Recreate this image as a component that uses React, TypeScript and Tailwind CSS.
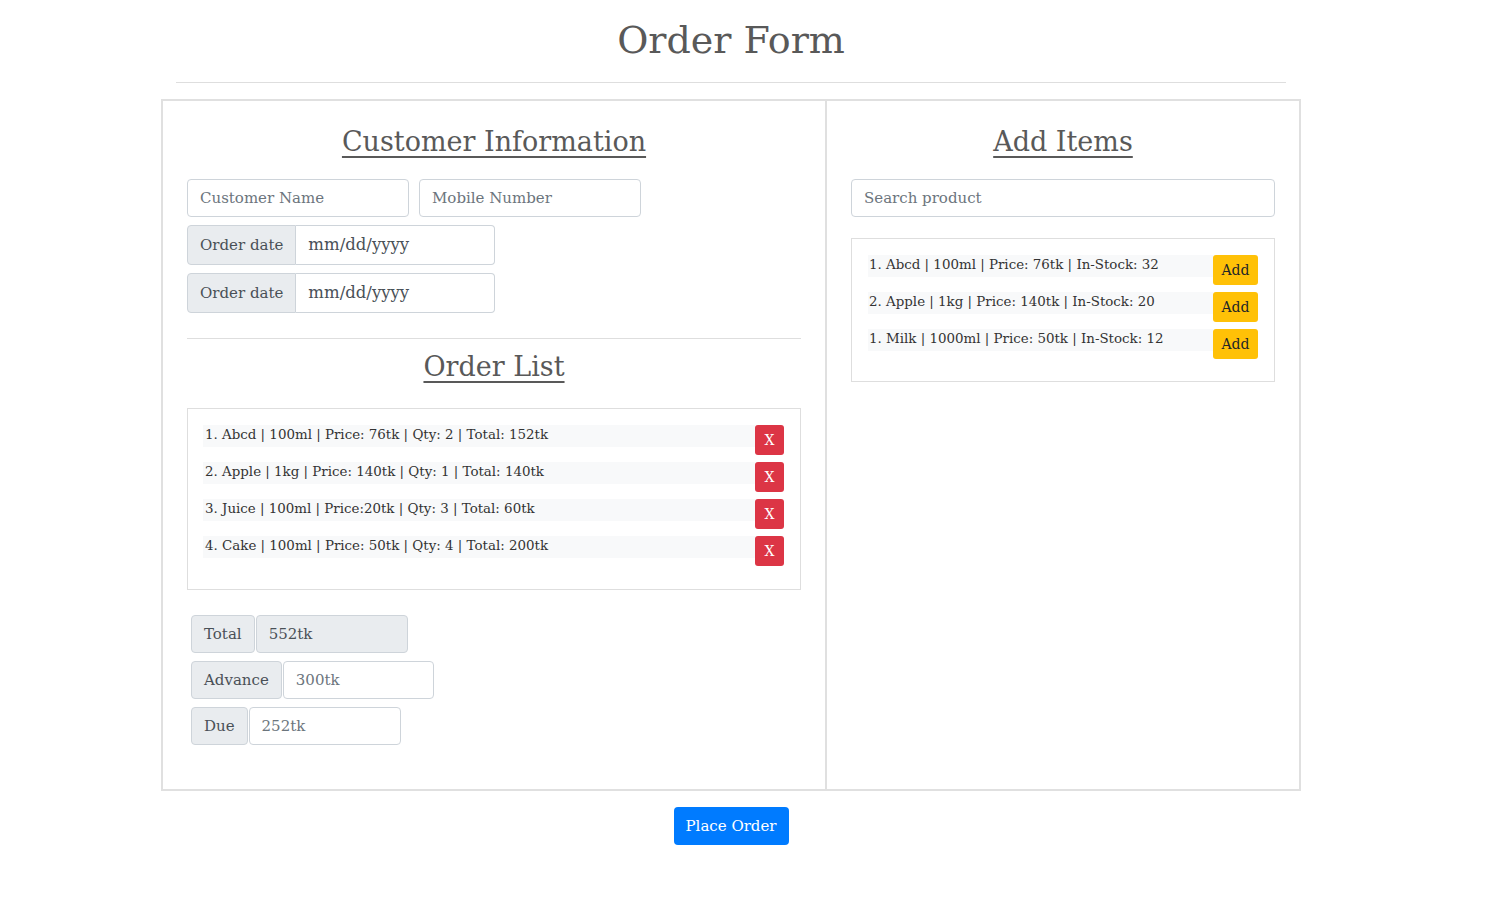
import { useState } from 'react';

const orderRows = [
  '1. Abcd | 100ml | Price: 76tk | Qty: 2 | Total: 152tk',
  '2. Apple | 1kg | Price: 140tk | Qty: 1 | Total: 140tk',
  '3. Juice | 100ml | Price:20tk | Qty: 3 | Total: 60tk',
  '4. Cake | 100ml | Price: 50tk | Qty: 4 | Total: 200tk',
];

const productRows = [
  '1. Abcd | 100ml | Price: 76tk | In-Stock: 32',
  '2. Apple | 1kg | Price: 140tk | In-Stock: 20',
  '1. Milk | 1000ml | Price: 50tk | In-Stock: 12',
];

function DateGroup() {
  return (
    <div className="flex h-[40px] w-[308px]">
      <span className="flex items-center px-3 bg-[#e9ecef] border border-[#ced4da] rounded-l-[4px] text-[#495057] text-[15px] whitespace-nowrap">
        Order date
      </span>
      <input
        readOnly
        defaultValue="mm/dd/yyyy"
        className="flex-1 min-w-0 px-3 border border-l-0 border-[#ced4da] rounded-r-[4px] text-[#495057] text-[16.5px] outline-none"
      />
    </div>
  );
}

function MoneyGroup({ label, value, disabled, width }: { label: string; value: string; disabled?: boolean; width: string }) {
  return (
    <div className="flex h-[38px] gap-[1px]">
      <span className="flex items-center px-3 bg-[#e9ecef] border border-[#ced4da] rounded-[4px] text-[#495057] text-[15px]">
        {label}
      </span>
      <input
        readOnly
        defaultValue={value}
        className={`${width} px-3 border border-[#ced4da] rounded-[4px] text-[15px] outline-none ${disabled ? 'bg-[#e9ecef] text-[#495057]' : 'bg-white text-[#6c757d]'}`}
      />
    </div>
  );
}

export default function App() {
  const [rows, setRows] = useState(orderRows);

  return (
    <div className="min-h-[907px] bg-white font-['DejaVu_Serif',serif] text-[#212529]">
      <div className="w-[1462px]">
        <div className="w-[1140px] mx-auto">
          <h1 className="pt-[14px] text-center text-[38px] leading-[52px] text-[#595959]">Order Form</h1>
          <hr className="mx-[15px] mt-[16px] mb-[16px] border-t border-[#dedede]" />

          {/* main box */}
          <div className="grid grid-cols-[664px_1fr] border-2 border-[#e0e0e0] h-[692px]">
            {/* left column */}
            <div className="border-r-2 border-[#e0e0e0] px-[24px]">
              <h3 className="mt-[21px] text-center text-[27px] leading-[40px] text-[#595959] underline underline-offset-[5px] decoration-[2px]">
                Customer Information
              </h3>
              <div className="mt-[17px] flex gap-[10px]">
                <input placeholder="Customer Name" className="w-[222px] h-[38px] px-3 border border-[#ced4da] rounded-[4px] text-[15px] placeholder:text-[#6c757d] outline-none" />
                <input placeholder="Mobile Number" className="w-[222px] h-[38px] px-3 border border-[#ced4da] rounded-[4px] text-[15px] placeholder:text-[#6c757d] outline-none" />
              </div>
              <div className="mt-[8px] flex flex-col gap-[8px]">
                <DateGroup />
                <DateGroup />
              </div>
              <hr className="mt-[25px] border-t border-[#dedede]" />
              <h3 className="mt-[8px] text-center text-[27px] leading-[40px] text-[#595959] underline underline-offset-[5px] decoration-[2px]">
                Order List
              </h3>
              <div className="mt-[21px] border border-[#dedede] pt-[16px] pb-[23px] pl-[15px] pr-[16px] flex flex-col gap-[7px]">
                {rows.map((r, i) => (
                  <div key={i} className="flex items-start">
                    <div className="flex-1 h-[22px] bg-[#f8f9fa] pl-[2px] text-[13.4px] leading-[20px] text-[#333] whitespace-nowrap">{r}</div>
                    <button
                      onClick={() => setRows(rows.filter((_, j) => j !== i))}
                      className="w-[29px] h-[30px] bg-[#dc3545] text-white text-[14px] rounded-[3px]"
                    >
                      X
                    </button>
                  </div>
                ))}
              </div>
              <div className="mt-[25px] ml-[4px] flex flex-col gap-[8px]">
                <MoneyGroup label="Total" value="552tk" disabled width="w-[152px]" />
                <MoneyGroup label="Advance" value="300tk" width="w-[151px]" />
                <MoneyGroup label="Due" value="252tk" width="w-[152px]" />
              </div>
            </div>

            {/* right column */}
            <div className="px-[24px]">
              <h3 className="mt-[21px] text-center text-[27px] leading-[40px] text-[#595959] underline underline-offset-[5px] decoration-[2px]">
                Add Items
              </h3>
              <input
                placeholder="Search product"
                className="mt-[17px] w-full h-[38px] px-3 border border-[#ced4da] rounded-[4px] text-[15px] placeholder:text-[#6c757d] outline-none"
              />
              <div className="mt-[21px] border border-[#dedede] pt-[16px] pb-[22px] px-[16px] flex flex-col gap-[7px]">
                {productRows.map((r, i) => (
                  <div key={i} className="flex items-start">
                    <div className="flex-1 h-[22px] bg-[#f8f9fa] pl-[1px] text-[13.4px] leading-[20px] text-[#333] whitespace-nowrap">{r}</div>
                    <button className="w-[45px] h-[30px] bg-[#ffc107] text-[#212529] text-[14px] rounded-[3px]">Add</button>
                  </div>
                ))}
              </div>
            </div>
          </div>

          <div className="mt-[16px] flex justify-center">
            <button className="h-[38px] px-[12px] bg-[#007bff] text-white text-[15px] rounded-[4px]">Place Order</button>
          </div>
        </div>
      </div>
    </div>
  );
}
